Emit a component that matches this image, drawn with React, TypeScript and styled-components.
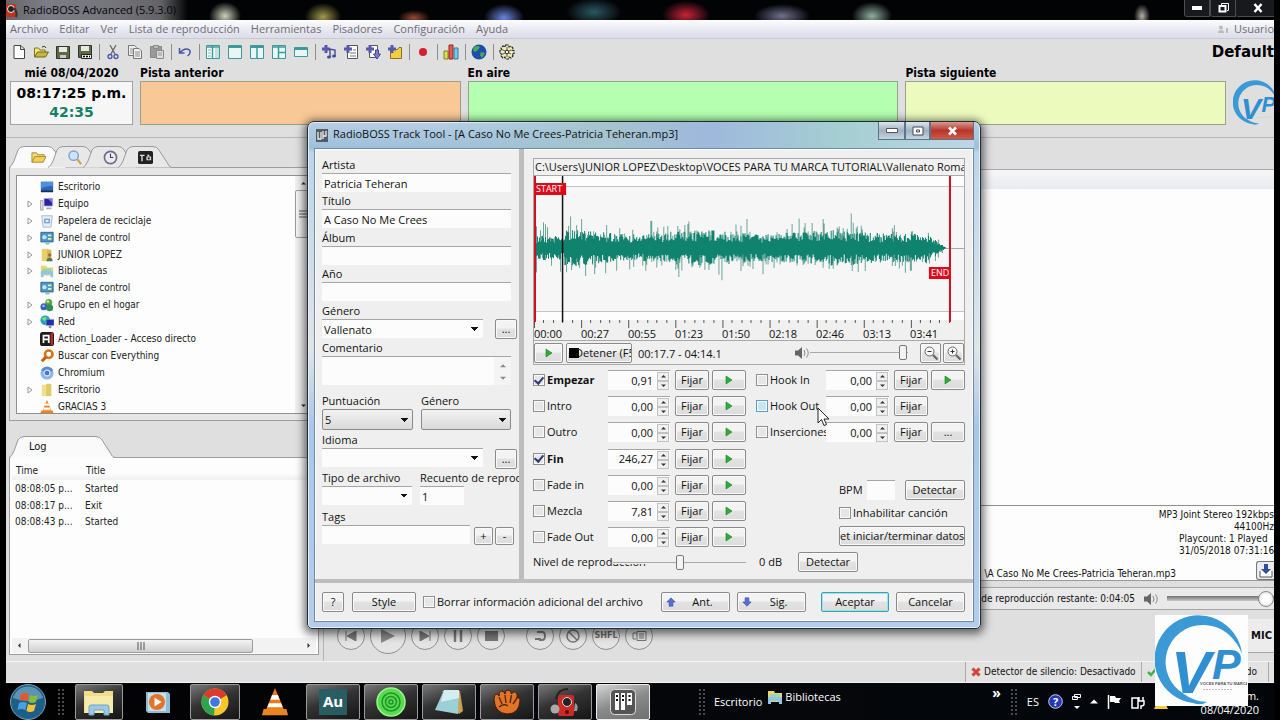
import React from "react";
import styled, { createGlobalStyle, css } from "styled-components";

const SEGOE = `"Open Sans", "Noto Sans", sans-serif`;
const TAHOMA = `"DejaVu Sans Condensed", "DejaVu Sans", sans-serif`;
const VERDANA = `"DejaVu Sans", sans-serif`;

const GlobalStyle = createGlobalStyle`
  * { box-sizing: border-box; }
  body { margin: 0; background: #000; color: #111; font: 11px/16px ${SEGOE}; overflow: hidden; }
  button, input, select, textarea { font: inherit; color: inherit; margin: 0; padding: 0; }
  ul, p, h1, h2 { margin: 0; padding: 0; list-style: none; font-size: inherit; }
  svg { display: block; flex: none; }
`;

/* ---------- main window ---------- */
const Desktop = styled.div`
  position: relative;
  display: flex;
  flex-direction: column;
  height: 100vh;
  padding: 0 6px;
  background: #000;
  overflow: hidden;
`;

const TitleBar = styled.header`
  display: flex;
  align-items: center;
  gap: 4px;
  flex: 0 0 20px;
  overflow: hidden;
  color: #050505;
  background:
    linear-gradient(90deg, #66666a, #7d7d88 40px, #74747a 110px, #636367 155px, transparent 182px) 0 0 / 190px 100% no-repeat,
    radial-gradient(ellipse 16px 14px at 219px 16px, #c9d4bb, transparent),
    radial-gradient(ellipse 18px 14px at 317px 17px, #a09a4c, transparent),
    radial-gradient(ellipse 16px 8px at 408px 18px, #9b4a33, transparent),
    radial-gradient(ellipse 20px 14px at 498px 18px, #6c86e0, transparent),
    radial-gradient(ellipse 28px 14px at 588px 12px, #2c5763, transparent),
    radial-gradient(ellipse 24px 14px at 680px 15px, #c92338, transparent),
    radial-gradient(ellipse 28px 12px at 776px 16px, #70708f, transparent),
    radial-gradient(ellipse 20px 14px at 866px 16px, #8fb0a0, transparent),
    radial-gradient(ellipse 8px 12px at 1136px 16px, #b6aea4, transparent),
    #020305;
`;

const TitleText = styled.h1`
  font-weight: 400;
  flex: 1;
`;

const CaptionButtons = styled.div`
  display: flex;
  align-self: flex-start;
  margin-right: -6px;
`;

const CaptionButton = styled.button<{ $wide?: boolean }>`
  display: grid;
  place-items: center;
  width: ${(p) => (p.$wide ? 44 : 26)}px;
  height: 17px;
  border: 1px solid #4a4d52;
  border-top: 0;
  border-left-width: ${(p) => (p.$wide ? 0 : 1)}px;
  border-radius: 0 0 0 3px;
  background: #17191c;
`;

const MenuBar = styled.nav`
  display: flex;
  align-items: center;
  flex: 0 0 19px;
  gap: 11px;
  padding: 0 0 0 4px;
  color: #6d6d74;
  background: linear-gradient(#fdfdfe, #e6e7f0 60%, #dcdde8);
  border-bottom: 1px solid #c9cad6;
  white-space: nowrap;
`;

const MenuItem = styled.a`
  color: inherit;
  text-decoration: none;
`;

const UserBox = styled.span`
  display: flex;
  gap: 6px;
  align-items: center;
  margin-left: auto;
`;

const Shell = styled.main`
  display: flex;
  flex-direction: column;
  flex: 1;
  min-height: 0;
  background: #dfdfdf;
  font: 10px/14px ${TAHOMA};
`;

const ToolBar = styled.div`
  display: flex;
  align-items: center;
  flex: 0 0 26px;
  padding-left: 5px;
  gap: 6px;
`;

const ToolButton = styled.button`
  border: 0;
  background: none;
  width: 16px;
  height: 18px;
  display: grid;
  place-items: center;
`;

const Divider = styled.span`
  width: 1px;
  height: 16px;
  margin-right: -1px;
  background: #8e8e8e;
`;

const ProfileName = styled.strong`
  margin-left: auto;
  font: bold 15px/18px ${VERDANA};
  color: #000;
`;

const NowRow = styled.section`
  display: flex;
  gap: 7px;
  flex: 0 0 73px;
  padding: 0 0 0 4px;
  border-bottom: 1px solid #b7b7b7;
`;

const Caption = styled.h2`
  font: bold 12px/16px ${TAHOMA};
  color: #000;
`;

const ClockBlock = styled.div`
  width: 123px;
  text-align: center;
`;

const ClockFace = styled.div`
  height: 44px;
  padding-top: 2px;
  border: 1px solid #a3a3a3;
  background: #f6f6f7;
  font: bold 14px/19px ${VERDANA};
  color: #000;
`;

const Countdown = styled.div`
  color: #118067;
`;

const TrackBlock = styled.div<{ $grow: number }>`
  flex: ${(p) => p.$grow} 1 0;
`;

const TrackBox = styled.div<{ $fill: string }>`
  height: 44px;
  border: 1px solid #9aa08e;
  background: ${(p) => p.$fill};
`;

const LogoSlot = styled.div`
  width: 41px;
  overflow: hidden;
  padding-top: 15px;
`;

const Body = styled.div`
  display: flex;
  flex: 1;
  min-height: 0;
`;

const LeftColumn = styled.div`
  display: flex;
  flex-direction: column;
  width: 318px;
  padding: 8px 4px 6px 3px;
  border-right: 1px solid #b4b4b4;
`;

const TabStrip = styled.div`
  display: flex;
  position: relative;
  z-index: 1;
  margin-bottom: -1px;
`;

const TabButton = styled.button<{ $w: number; $overlap?: boolean; $text?: boolean }>`
  position: relative;
  width: ${(p) => p.$w}px;
  height: 22px;
  border: 0;
  background: none;
  margin-left: ${(p) => (p.$overlap ? -19 : 0)}px;
  > svg { position: absolute; inset: 0; }
  > span {
    position: relative;
    display: grid;
    justify-content: ${(p) => (p.$text ? "start" : "center")};
    padding-left: ${(p) => (p.$text ? 20 : 0)}px;
    font-size: 11px;
  }
`;

const TreePanel = styled.div`
  height: 254px;
  flex: none;
  padding: 7px 0 6px 6px;
  border: 1px solid #9d9d9d;
  background: #e6e6e6;
  margin-bottom: 15px;
`;

const TreeFrame = styled.div`
  display: flex;
  height: 100%;
  border: 1px solid #8f8f8f;
  background: #fdfdfd;
  overflow: hidden;
`;

const TreeList = styled.ul`
  flex: 1;
  padding: 2px 0 0 10px;
`;

const TreeRow = styled.li`
  display: flex;
  align-items: center;
  height: 17px;
  color: #222;
  &:nth-child(6) { height: 16px; }
`;

const Twisty = styled.span`
  width: 13px;
`;

const TreeLabel = styled.span`
  margin-left: 4px;
`;

const VScroll = styled.div`
  display: flex;
  flex-direction: column;
  align-items: center;
  width: 22px;
  padding: 5px 6px 5px 0;
  background: #f0f0f0;
`;

const VThumb = styled.div`
  display: grid;
  place-items: center;
  width: 16px;
  height: 48px;
  margin: 4px 0 auto;
  border: 1px solid #9b9b9b;
  border-radius: 2px;
  background: linear-gradient(90deg, #f7f7f7, #d6d6d6);
`;

const LogPanel = styled.div`
  display: flex;
  flex-direction: column;
  flex: 1;
  min-height: 0;
  border: 1px solid #9d9d9d;
  background: #fdfdfd;
  padding: 4px 2px 1px;
`;

const LogTable = styled.table`
  width: 100%;
  border-collapse: collapse;
  text-align: left;
  color: #222;
  th { font-weight: 400; height: 18px; padding: 0 4px; background: linear-gradient(#fdfdfd 60%, #efefef); }
  th:first-child { width: 70px; }
  td { height: 16px; padding: 0 3px; }
  tbody tr:first-child td { height: 18px; }
`;

const HScroll = styled.div`
  display: flex;
  align-items: center;
  justify-content: space-between;
  height: 15px;
  margin-top: auto;
  padding: 0 5px;
  background: #f2f2f2;
`;

const HThumb = styled.div`
  display: grid;
  place-items: center;
  flex: 0 0 225px;
  height: 14px;
  margin: 0 auto 0 6px;
  border: 1px solid #9b9b9b;
  border-radius: 2px;
  background: linear-gradient(#f4f4f4, #cfcfcf);
`;

const RightColumn = styled.div`
  display: flex;
  flex-direction: column;
  flex: 1;
  min-width: 0;
  padding-left: 3px;
`;

const PlaylistHead = styled.div`
  flex: 0 0 20px;
  margin-top: 31px;
  border-top: 1px solid #a9a9a9;
  background: linear-gradient(#f6f6f8, #e9eaef);
`;

const Playlist = styled.div`
  flex: 1;
  background: #fdfdfd;
  border-bottom: 1px solid #8e8e8e;
`;

const TrackInfo = styled.div`
  display: flex;
  flex: 0 0 75px;
  flex-direction: column;
  padding-top: 3px;
  background: #fdfdfd;
  border-bottom: 1px solid #9a9a9a;
  line-height: 12px;
`;

const InfoLine = styled.p<{ $left?: boolean }>`
  display: flex;
  align-self: flex-end;
  width: ${(p) => (p.$left ? "95px" : "auto")};
  justify-content: ${(p) => (p.$left ? "flex-start" : "flex-end")};
  white-space: nowrap;
`;

const FileLine = styled.div`
  display: flex;
  align-items: center;
  justify-content: flex-end;
  gap: 80px;
  margin-top: auto;
  > span { padding-top: 7px; }
`;

const SaveButton = styled.button`
  display: grid;
  place-items: center;
  width: 18px;
  height: 19px;
  border: 1px solid #777;
  border-right: 0;
  border-radius: 3px 0 0 3px;
  background: #ececec;
`;

const Remaining = styled.div`
  display: flex;
  align-items: center;
  justify-content: flex-end;
  gap: 8px;
  flex: 0 0 23px;
  margin-top: 6px;
  border: 1px solid #a5a5a5;
  border-right: 0;
  background: #e9e9e9;
`;

const VolumeRange = styled.input`
  appearance: none;
  width: 107px;
  height: 16px;
  background: none;
  &::-webkit-slider-runnable-track { height: 5px; background: linear-gradient(#6f6f6f, #c9c9c9); }
  &::-webkit-slider-thumb { appearance: none; width: 16px; height: 16px; margin-top: -5px; border-radius: 50%; border: 1px solid #888; background: radial-gradient(#fff 40%, #cfcfcf); }
`;

const Transport = styled.div`
  display: flex;
  align-items: center;
  flex: 0 0 51px;
  padding-left: 10px;
  gap: 5px;
`;

const RoundButton = styled.button<{ $big?: boolean; $apart?: boolean }>`
  display: grid;
  place-items: center;
  width: ${(p) => (p.$big ? 36 : 28)}px;
  height: ${(p) => (p.$big ? 36 : 28)}px;
  margin-left: ${(p) => (p.$apart ? 16 : 0)}px;
  border: 1px solid #8f8f8f;
  border-radius: 50%;
  background: #e4e4e4;
  color: #6c6c6c;
  font: bold 8px/10px ${VERDANA};
`;

const MicButton = styled.button`
  display: flex;
  align-items: center;
  justify-content: flex-end;
  align-self: flex-start;
  margin: 9px 0 0 auto;
  width: 60px;
  height: 34px;
  padding-right: 2px;
  border: 0;
  border-bottom: 1px solid #aaa;
  background: #ececec;
  font: bold 10px/14px ${VERDANA};
`;

const StatusBar = styled.footer`
  display: flex;
  justify-content: flex-end;
  flex: 0 0 22px;
  border-top: 1px solid #f4f4f4;
  border-bottom: 1px solid #f4f4f4;
  background: #dfdfdf;
`;

const StatusCell = styled.div<{ $w: number }>`
  display: flex;
  align-items: center;
  gap: 3px;
  width: ${(p) => p.$w}px;
  padding-left: 5px;
  border-left: 1px solid #aaa;
  background: #e3e3e3;
  white-space: nowrap;
`;

const TrailingText = styled.span`
  margin-left: auto;
  padding-right: 11px;
`;

/* ---------- taskbar ---------- */
const TaskBar = styled.nav`
  display: flex;
  align-items: center;
  flex: 0 0 37px;
  padding-left: 4px;
  background: linear-gradient(90deg, #020203, #05070b 60%, #02060a);
  color: #fff;
`;

const TaskButton = styled.button<{ $w: number; $mode?: "open" | "active"; $gap?: number }>`
  display: grid;
  place-items: center;
  width: ${(p) => p.$w}px;
  height: 36px;
  margin-left: ${(p) => p.$gap ?? 4}px;
  border: 1px solid transparent;
  border-radius: 2px;
  background: none;
  ${(p) => p.$mode === "open" && css`
    border-color: #9a9a9a;
    background: linear-gradient(160deg, #777 0, #333 45%, #151515);
  `}
  ${(p) => p.$mode === "active" && css`
    border-color: #ededed;
    background: linear-gradient(160deg, #d5d5d5 0, #8a8a8a 50%, #6f6f6f);
  `}
`;

const Grip = styled.span`
  width: 8px;
  height: 28px;
  background: radial-gradient(circle, #4a4a4a 1px, transparent 1px) 0 0 / 4px 4px;
`;

const DeskBand = styled.div`
  display: flex;
  align-items: center;
  gap: 5px;
  margin-left: 8px;
`;

const BandLink = styled.a<{ $raised?: boolean }>`
  display: flex;
  align-items: center;
  gap: 2px;
  color: #fff;
  text-decoration: none;
  padding-bottom: ${(p) => (p.$raised ? 9 : 0)}px;
`;

const Chevron = styled.button`
  border: 0;
  background: none;
  align-self: flex-start;
  font: bold 14px/12px ${SEGOE};
`;

const Tray = styled.div`
  display: flex;
  align-items: center;
  gap: 9px;
  margin-left: auto;
`;

const Clock = styled.div`
  width: 82px;
  padding-top: 2px;
  text-align: right;
  line-height: 14px;
  margin-right: 15px;
`;

const Watermark = styled.div`
  position: absolute;
  right: 32px;
  bottom: 14px;
  width: 93px;
  height: 91px;
  background: #fdfdfd;
`;

/* ---------- track tool dialog ---------- */
const Dialog = styled.section`
  position: absolute;
  left: 307px;
  top: 121px;
  width: 674px;
  display: flex;
  flex-direction: column;
  padding: 0 6px 6px;
  border: 1px solid #222a33;
  border-radius: 7px 7px 5px 5px;
  background: linear-gradient(#b5cfe4, #9fbfd9 26px, #bcd4ec 30px, #dfe5e6 45%, #a9c6ea 60%, #b4cdec);
  box-shadow: inset 0 0 0 1px #e4f1fb, 0 2px 8px 3px rgba(0, 0, 0, 0.55);
`;

const DialogTitle = styled.header`
  display: flex;
  align-items: center;
  height: 26px;
  padding-left: 2px;
  gap: 5px;
  border-radius: 6px 6px 0 0;
  background: linear-gradient(90deg, transparent 20%, #a4c4cf 45%, #9fb8dd 60%, #a5cfd2 80%, #bcd6e6);
  > h2 { flex: 1; font-weight: 400; line-height: 24px; align-self: flex-start; }
`;

const GlassGroup = styled.div`
  display: flex;
  align-self: flex-start;
  > * + * { border-left: 0; }
`;

const GlassButton = styled.button<{ $w: number; $close?: boolean }>`
  display: grid;
  place-items: center;
  width: ${(p) => p.$w}px;
  height: 18px;
  border: 1px solid #5c7488;
  border-top: 0;
  background: ${(p) => (p.$close ? "linear-gradient(#d99a92, #b8352b 50%, #cf5a48)" : "linear-gradient(#dce6ee, #9fb1c0 50%, #c4d5e2)")};
`;

const DialogBody = styled.form`
  background: #efefef;
  border: 1px solid #6c8ba8;
  box-shadow: inset 0 0 0 1px #fff;
`;

const Panes = styled.div`
  display: flex;
  height: 434px;
  border-bottom: 4px solid #bdbdbd;
`;

const TagPane = styled.div`
  display: flex;
  flex-direction: column;
  width: 209px;
  flex: none;
  padding: 7px 8px 0 7px;
  border-right: 5px solid #bdbdbd;
`;

const Field = styled.label<{ $h?: number; $w?: number }>`
  display: flex;
  flex-direction: column;
  flex: none;
  height: ${(p) => p.$h ?? 37}px;
  width: ${(p) => (p.$w ? p.$w + "px" : "auto")};
  line-height: 17px;
  white-space: nowrap;
`;

const boxLook = css`
  border: 0;
  border-top: 1px solid #a6a6a6;
  border-radius: 0;
  background: #fcfcfc;
  outline: 0;
`;

const TextInput = styled.input<{ $short?: boolean }>`
  ${boxLook}
  width: ${(p) => (p.$short ? "44px" : "100%")};
  height: 19px;
  padding: 0 2px;
`;

const NoteBox = styled.div`
  display: flex;
  height: 29px;
  border-top: 1px solid #a6a6a6;
`;

const NoteArea = styled.textarea`
  flex: 1;
  min-width: 0;
  border: 0;
  resize: none;
  background: #fcfcfc;
  outline: 0;
`;

const NoteScroll = styled.div`
  display: flex;
  flex-direction: column;
  justify-content: space-between;
  align-items: center;
  width: 17px;
  padding: 6px 0 4px;
  background: #f4f4f4;
`;

const caret = "linear-gradient(to bottom left, #111 50%, transparent 50%), linear-gradient(to bottom right, #111 50%, transparent 50%)";

const Combo = styled.select<{ $button?: boolean }>`
  appearance: none;
  width: 100%;
  height: ${(p) => (p.$button ? 21 : 19)}px;
  padding: 0 2px;
  ${boxLook}
  background-image: ${caret};
  background-size: 4px 4px, 4px 4px;
  background-position: right 8px center, right 4px center;
  background-repeat: no-repeat;
  ${(p) => p.$button && css`
    border: 1px solid #8a8a8a;
    border-radius: 2px;
    background-image: ${caret}, linear-gradient(#f2f2f2, #dadada);
    background-size: 4px 4px, 4px 4px, 100% 100%;
    background-position: right 7px center, right 3px center, 0 0;
  `}
`;

const Inline = styled.div<{ $gap: number }>`
  display: flex;
  align-items: center;
  gap: ${(p) => p.$gap}px;
`;

const FieldRow = styled(Inline)<{ $clip?: boolean }>`
  align-items: flex-end;
  flex: none;
  ${(p) => p.$clip && "overflow: hidden; margin-right: -8px;"}
`;

const PushButton = styled.button<{ $w: number; $h?: number; $default?: boolean }>`
  display: flex;
  align-items: center;
  justify-content: center;
  flex: none;
  width: ${(p) => p.$w}px;
  height: ${(p) => p.$h ?? 20}px;
  overflow: hidden;
  white-space: nowrap;
  border: 1px solid ${(p) => (p.$default ? "#35a3b5" : "#8a8a8a")};
  border-radius: 2px;
  box-shadow: inset 0 0 0 1px ${(p) => (p.$default ? "#a5e0e8" : "#fafafa")};
  background: linear-gradient(#f3f3f3 45%, #e2e2e2 50%, #dcdcdc);
`;

const IconPush = styled(PushButton)`
  justify-content: flex-start;
  padding-left: 4px;
  > span { flex: 1; text-align: center; }
`;

const StopPush = styled(PushButton)`
  justify-content: flex-start;
  padding-left: 2px;
  > svg { margin-right: -4px; }
`;

const CuePane = styled.div`
  flex: 1;
  min-width: 0;
  padding: 9px 8px 0 9px;
  display: flex;
  flex-direction: column;
`;

const PathBox = styled.div`
  height: 18px;
  overflow: hidden;
  white-space: nowrap;
  padding-left: 1px;
  border: 1px solid #a9a9a9;
  background: #f1f1f1;
`;

const WaveFrame = styled.div`
  height: 165px;
  border: 1px solid #a9a9a9;
  border-top: 0;
  background: #f0f0f0;
`;

const TimeScale = styled.div`
  display: flex;
  > span { width: 47px; flex: none; line-height: 12px; }
`;

const PlayRow = styled.div`
  display: flex;
  align-items: center;
  height: 24px;
  border: 1px solid #a9a9a9;
  border-top: 0;
`;

const Elapsed = styled.time`
  margin: 3px auto 0 6px;
`;

const ThinRange = styled.input<{ $w: number; $overlay?: boolean }>`
  appearance: none;
  width: ${(p) => p.$w}px;
  height: 18px;
  background: ${(p) => (p.$overlay ? "linear-gradient(#efefef 11px, transparent 0)" : "none")};
  position: relative;
  &::-webkit-slider-runnable-track { height: 1px; background: #a9a9a9; }
  &::-webkit-slider-thumb { appearance: none; width: 8px; height: 15px; margin-top: -7px; border-radius: 2px; border: 1px solid #777; background: #f4f4f4; }
`;

const CueArea = styled.div`
  display: grid;
  grid-template-columns: 213px 209px;
  justify-content: space-between;
  padding-top: 2px;
`;

const CueRow = styled.div<{ $cols: string }>`
  display: grid;
  grid-template-columns: ${(p) => p.$cols};
  align-items: center;
  height: 26px;
  &:nth-child(4) { height: 27px; }
`;

const CheckLabel = styled.label<{ $bold?: boolean }>`
  display: flex;
  align-items: center;
  gap: 2px;
  overflow: hidden;
  white-space: nowrap;
  font-weight: ${(p) => (p.$bold ? 700 : 400)};
`;

const Check = styled.input<{ $hot?: boolean }>`
  appearance: none;
  flex: none;
  width: 12px;
  height: 12px;
  border: 1px solid ${(p) => (p.$hot ? "#5c9fc4" : "#8f8f8f")};
  background: ${(p) => (p.$hot ? "#c6e6f6" : "#e6e6e8")};
  box-shadow: inset 0 0 0 1px #fafafa;
  display: grid;
  place-items: center;
  &:checked::after { content: ""; width: 4px; height: 7px; border: solid #2c3a78; border-width: 0 2px 2px 0; transform: translateY(-1px) rotate(40deg); }
`;

const NumberBox = styled.span`
  display: flex;
  height: 20px;
  padding-right: 1px;
  ${boxLook}
`;

const NumberInput = styled.input`
  flex: 1;
  min-width: 0;
  border: 0;
  background: none;
  text-align: right;
  outline: 0;
`;

const BpmInput = styled.input`
  ${boxLook}
  width: 28px;
  height: 20px;
`;

const Spin = styled.span`
  display: grid;
  margin: 1px 0 1px 4px;
`;

const SpinButton = styled.button<{ $down?: boolean }>`
  display: grid;
  place-items: center;
  width: 12px;
  height: 9px;
  border: 1px solid #c2c2c2;
  background: #f0f0f0;
  > svg { transform: ${(p) => (p.$down ? "rotate(180deg)" : "none")}; }
`;

const CueExtras = styled.div`
  display: flex;
  flex-direction: column;
  align-items: flex-start;
  width: 126px;
  margin: 35px 0 0 auto;
`;

const BpmLabel = styled.label`
  display: flex;
  align-items: center;
  gap: 4px;
`;

const WideButton = styled(PushButton)`
  justify-content: flex-start;
`;

const LevelRow = styled.div`
  display: flex;
  align-items: center;
  height: 20px;
  margin-top: 2px;
  > label { width: 80px; white-space: nowrap; }
  > output { width: 52px; padding-left: 13px; }
`;

const DialogFooter = styled.div`
  display: flex;
  align-items: center;
  height: 38px;
  padding: 0 8px 0 7px;
`;

const Spacer = styled.span<{ $w?: number }>`
  ${(p) => (p.$w ? `width: ${p.$w}px;` : "flex: 1;")}
`;

const Cursor = styled.svg`
  position: absolute;
  left: 817px;
  top: 407px;
`;

/* ---------- drawings ---------- */
const PlayIcon = () => (
  <svg width="8" height="10" viewBox="0 0 8 10"><path d="M1 1l6 4-6 4z" fill="#2cae37" stroke="#16801f" strokeWidth=".6" /></svg>
);
const Tri = ({ dir = "up", color = "#333", s = 5 }: { dir?: string; color?: string; s?: number }) => {
  const d: Record<string, string> = { up: "M0 7L5 2l5 5z", down: "M0 3l5 5 5-5z", left: "M7 0v10L2 5z", right: "M3 0v10l5-5z" };
  return <svg width={s} height={s} viewBox="0 0 10 10"><path d={d[dir]} fill={color} /></svg>;
};
const Gripper = ({ vertical = false }: { vertical?: boolean }) => (
  <svg width="8" height="8" viewBox="0 0 8 8"><path d={vertical ? "M0 1h8M0 4h8M0 7h8" : "M1 0v8M4 0v8M7 0v8"} stroke="#555" /></svg>
);
const Speaker = () => (
  <svg width="16" height="14" viewBox="0 0 16 14">
    <path d="M1 4.500h3l4-3.500v12L4 9.500H1z" fill="#666" />
    <path d="M10 4q2 3 0 6M12.500 2.500q3.500 4.500 0 9" fill="none" stroke="#888" />
  </svg>
);
const Lens = ({ minus = false }: { minus?: boolean }) => (
  <svg width="16" height="16" viewBox="0 0 16 16" fill="none" stroke="#666">
    <circle cx="6.500" cy="6.500" r="4.500" fill="#f8f8f8" /><path d="M10 10l4.500 4.500" strokeWidth="2.200" />
    <path d={minus ? "M4.500 6.500h4" : "M4.500 6.500h4M6.500 4.500v4"} stroke="#333" />
  </svg>
);
const ShortArrow = ({ down = false }: { down?: boolean }) => (
  <svg width="10" height="10" viewBox="0 0 12 12"><path transform={down ? "rotate(180 6 6)" : undefined} d="M6 1l5 5H8.300v5H3.700V6H1z" fill="#5670d6" stroke="#33449c" strokeWidth=".7" /></svg>
);

const TOOL: Record<string, React.ReactNode> = {
  new: <path d="M3 1.500h7l3.500 3.500v9.500H3z M9.500 1.500v4h4" fill="#fff" stroke="#444" />,
  open: <><path d="M1.500 13V4h4l1.500 2h5v2" fill="#f5e680" stroke="#7d7421" /><path d="M1.500 13L4.500 8h11l-3 5z" fill="#c9b83a" stroke="#6d651c" /><path d="M9 3q3-2 4 1" fill="none" stroke="#333" /></>,
  save: <><path d="M1.500 2.500h13v12h-13z" fill="#5c6b40" stroke="#333" /><path d="M4 3h8v5H4z" fill="#e8e8e8" /><path d="M5 11h6v3H5z" fill="#ccc" /></>,
  saveAs: <><path d="M1.500 1.500h13v12h-13z" fill="#5c6b40" stroke="#333" /><path d="M4 2h8v5H4z" fill="#e8e8e8" /><path d="M4.500 10.500h10v4h-10z" fill="#f4f4e8" stroke="#222" /><path d="M6 12.500h2m1 0h2m1 0h1" stroke="#000" strokeWidth="1.500" /></>,
  cut: <><path d="M5 1l5 9M11 1L6 10" stroke="#666" strokeWidth="1.300" /><circle cx="5" cy="12.500" r="2" fill="none" stroke="#4a56ae" strokeWidth="1.300" /><circle cx="11" cy="12.500" r="2" fill="none" stroke="#4a56ae" strokeWidth="1.300" /></>,
  copy: <><path d="M1.500 1.500h6l2 2v8h-8z" fill="#eee" stroke="#777" /><path d="M3 5h3m-3 2h3m-3 2h3" stroke="#999" /><path d="M6.500 4.500h5.500l2.500 2.500v7.500h-8z" fill="#f3f3f3" stroke="#777" /><path d="M8 8h5m-5 2h5m-5 2h5" stroke="#888" /></>,
  paste: <><path d="M1.500 2.500h11v11h-11z" fill="#9a9a9a" stroke="#888" /><path d="M4.500 1.500h5v3h-5z" fill="#bbb" stroke="#888" /><path d="M7.500 6.500h7v8h-7z" fill="#ddd" stroke="#888" /><path d="M9 9h4m-4 2h4" stroke="#999" /></>,
  undo: <path d="M2.500 4v5h5M3 8.500Q8 3 12.500 6q2 3-2 6" fill="none" stroke="#4b55a5" strokeWidth="1.500" />,
  lay1: <><path d="M1.500 1.500h13v13h-13z" fill="#fff" stroke="#3c9a9b" /><path d="M7.500 2v12M2 3h12" stroke="#3c9a9b" strokeWidth="1.500" /><path d="M3 6h3M3 9h3M3 12h3" stroke="#6bb" /><path d="M10 4h4v10h-4z" fill="#bfe3df" /></>,
  lay2: <><path d="M1.500 1.500h13v13h-13z" fill="#e9f6f4" stroke="#3c9a9b" /><path d="M2 3h12" stroke="#3c9a9b" strokeWidth="2" /></>,
  lay3: <><path d="M1.500 1.500h13v13h-13z" fill="#e9f6f4" stroke="#3c9a9b" /><path d="M2 3h12" stroke="#3c9a9b" strokeWidth="2" /><path d="M8 3v11" stroke="#3c9a9b" strokeWidth="1.500" /></>,
  lay4: <><path d="M1.500 1.500h13v13h-13z" fill="#e9f6f4" stroke="#3c9a9b" /><path d="M2 3h12M7.500 2v12M8 8.500h6" stroke="#3c9a9b" strokeWidth="1.500" /></>,
  lay5: <><path d="M1.500 3.500h13v9h-13z" fill="#e9f6f4" stroke="#3c9a9b" /><path d="M2 5h12" stroke="#3c9a9b" strokeWidth="2" /></>,
  addNote: <><path d="M5 1v8M1 5h8" stroke="#5a58a8" strokeWidth="3" /><path d="M9 13V5l5 1v6" fill="none" stroke="#444a99" strokeWidth="1.400" /><ellipse cx="8" cy="13" rx="2" ry="1.500" fill="#444a99" /><ellipse cx="13" cy="12" rx="2" ry="1.500" fill="#444a99" /></>,
  addList: <><path d="M4.500 1.500h10v13h-10z" fill="#fff" stroke="#555" /><path d="M7 9h6m-6 3h6m-3-6h3" stroke="#777" /><path d="M5 1v8M1 5h8" stroke="#5a58a8" strokeWidth="3" /></>,
  addDown: <><path d="M4.500 1.500h8v12h-8z" fill="#fff" stroke="#555" /><path d="M5 1v8M1 5h8" stroke="#5a58a8" strokeWidth="3" /><path d="M10.500 6v4H8.500l3.500 5 3.500-5H13.500V6z" fill="#7d7bd0" stroke="#44449a" /></>,
  addFolder: <><path d="M3.500 5.500h7l1.500-2h2.500v11h-11z" fill="#f0cf45" stroke="#8d7216" /><path d="M5 1v8M1 5h8" stroke="#5a58a8" strokeWidth="3" /></>,
  rec: <circle cx="8" cy="8" r="4" fill="#d3202e" />,
  chart: <><path d="M1 7h4v8H1z" fill="#d8e24a" stroke="#7a8422" /><path d="M6 1h4v14H6z" fill="#e35b52" stroke="#9b241d" /><path d="M11 4h4v11h-4z" fill="#79c6e8" stroke="#2a7fa5" /></>,
  globe: <><circle cx="8" cy="8" r="7.500" fill="#1d4fa8" /><path d="M3 3q4-2 6 0l-2 3-3 2q-3-1-1-5zM10 8l4 1-3 5-2-3z" fill="#48ab5c" /></>,
  gear: <><path d="M6.500 1h3l.5 2 2-.8 2 2-1 2 2 .3v3l-2 .5 1 2-2 2-2-1-.5 2h-3L6 13l-2 1-2-2 1-2-2-.5v-3L3 6 2 4l2-2 2 1z" fill="#f0ecb4" stroke="#222" strokeWidth="1.100" strokeDasharray="3 1" /><path d="M8 3v10M4 6l8 4M12 6l-8 4" stroke="#333" strokeWidth=".8" /><circle cx="8" cy="8" r="1.800" fill="#fff" stroke="#222" /></>,
};
const TOOL_ORDER = ["new", "open", "save", "saveAs", "|", "cut", "copy", "paste", "|", "undo", "|", "lay1", "lay2", "lay3", "lay4", "lay5", "|", "addNote", "addList", "addDown", "addFolder", "|", "rec", "|", "chart", "|", "globe", "|", "gear"];

const ICONS: Record<string, React.ReactNode> = {
  desktop: <><path d="M1 2h14v11H1z" fill="#2b66b8" /><path d="M1 2h14v5Q7 6 1 10z" fill="#4f8fd8" /><path d="M1 12h14v2H1z" fill="#1b2d55" /></>,
  computer: <><path d="M0.500 4h3v11h-3z" fill="#ddd" stroke="#888" strokeWidth=".7" /><path d="M4 1h11v10H4z" fill="#c9c9d8" /><path d="M5 2h9v8H5z" fill="#2a22a8" /><path d="M9 2h5v5z" fill="#7d77e2" /><path d="M7 12h6v2H7z" fill="#aaa" /></>,
  bin: <><path d="M2 2h12l-1.500 13h-9z" fill="#e6eef6" stroke="#a5b6c6" /><path d="M5.500 6h5v4h-5z" fill="none" stroke="#5a8fd6" strokeWidth="1.300" /></>,
  panel: <><path d="M1 1.500h14v11H1z" fill="#4c97c6" stroke="#246085" /><circle cx="5" cy="7" r="2.500" fill="#bfe4f2" /><path d="M9 4h4v2H9zM9 8h4v2H9z" fill="#e4f3a8" /><path d="M5 13h7l-2 2.500H7z" fill="#8dbbd6" /></>,
  user: <><path d="M2 1h8v14H2z" fill="#e8cf6b" /><path d="M8 2h5v13H8z" fill="#d8b94c" /><circle cx="11" cy="8" r="2" fill="#a56b3e" /><path d="M7.500 15q0-4 3.500-4t3.500 4z" fill="#4b7d52" /></>,
  libs: <><path d="M1 2h6l1 2h7v9H1z" fill="#ecd471" /><path d="M3 5h10v6H3z" fill="#9fd3a8" /><path d="M1 15V9q0-1 1-1h12q1 0 1 1v6h-3v-3H4v3z" fill="#8dc6e6" /></>,
  home: <><circle cx="10" cy="5" r="4" fill="#5aa747" /><circle cx="4.500" cy="10" r="4" fill="#3a5fc2" /><circle cx="11" cy="11" r="4" fill="#2f8f57" /><circle cx="9" cy="4" r="1.500" fill="#c6ecae" /><circle cx="4" cy="9" r="1.300" fill="#b9cbf6" /></>,
  net: <><circle cx="6" cy="6" r="5.500" fill="#28a3b8" /><path d="M2 4q3-3 6-1l-3 4z" fill="#7be37c" /><path d="M7 5h9v7H7z" fill="#1c31b8" stroke="#aab" strokeWidth=".6" /><path d="M10 12h3v3h-3z" fill="#888" /></>,
  action: <><rect width="16" height="16" rx="3" fill="#1c1c1c" /><path d="M12 1h3v14h-3z" fill="#b12a2a" /><path d="M4 12.500V4h6v8.500M4 8.500h6" fill="none" stroke="#fff" strokeWidth="2" /></>,
  search: <><circle cx="10" cy="6" r="4.300" fill="none" stroke="#d8731a" strokeWidth="3" /><path d="M7 9l-5 5" stroke="#c05f12" strokeWidth="3.500" /></>,
  chromium: <><circle cx="8" cy="8" r="7.500" fill="#8fb4ee" /><path d="M8 8L1.500 5A7.500 7.500 0 0 1 15 5z" fill="#5f8ad8" /><circle cx="8" cy="8" r="3.300" fill="#4775cf" stroke="#dce8fb" strokeWidth="1.200" /></>,
  folder: <><path d="M2 2h6v13H2z" fill="#efe08e" /><path d="M7 1h6v14H7z" fill="#dfc968" /></>,
  vlc: <><path d="M8 0l5 12H3z" fill="#ec7a1c" /><path d="M6.300 4h3.400l1 2.700H5.300z" fill="#fff" /><path d="M4.500 8.700h7l.9 2.300H3.600z" fill="#fff" /><path d="M1.500 12h13l1 3.500H.5z" fill="#e9851c" /></>,
  openTab: <><path d="M1 13V3h5l1 2h7v2" fill="#f4dd7c" stroke="#a88a2a" /><path d="M1 13l3-6h12l-3 6z" fill="#f1cf58" stroke="#a88a2a" /></>,
  lensTab: <><circle cx="6" cy="6" r="5" fill="#cfe4f8" stroke="#7da4cc" strokeWidth="1.500" /><path d="M10 10l4 5" stroke="#c9a13e" strokeWidth="2.200" /></>,
  clockTab: <><circle cx="8" cy="8" r="6.500" fill="#e9eaf2" stroke="#6b6e86" strokeWidth="1.800" /><path d="M8 4v4h3" fill="none" stroke="#444" strokeWidth="1.200" /></>,
  cam: <><rect y="1" width="16" height="14" rx="2" fill="#222" /><path d="M2 5h5v1.500H5V12H3.500V6.500H2zM9 7h5v4H9z" fill="#ddd" /><path d="M10 5h2v2h-2z" fill="#ddd" /><circle cx="11.500" cy="9" r="1.200" fill="#222" /></>,
};
const Icon = ({ name, size = 14 }: { name: string; size?: number }) => (
  <svg width={size} height={size} viewBox="0 0 16 16">{ICONS[name]}</svg>
);

const TREE: [string, string, boolean][] = [
  ["desktop", "Escritorio", false], ["computer", "Equipo", true], ["bin", "Papelera de reciclaje", true],
  ["panel", "Panel de control", true], ["user", "JUNIOR LOPEZ", true], ["libs", "Bibliotecas", true],
  ["panel", "Panel de control", false], ["home", "Grupo en el hogar", true], ["net", "Red", true],
  ["action", "Action_Loader - Acceso directo", false], ["search", "Buscar con Everything", false],
  ["chromium", "Chromium", false], ["folder", "Escritorio", true], ["vlc", "GRACIAS 3", false],
];

const TabShape = ({ w, active = false }: { w: number; active?: boolean }) => (
  <svg width={w} height="22" viewBox={`0 0 ${w} 22`}>
    <path d={`M0 21.500Q3 20 5 15L9 4Q11 .5 15 .5H${w - 19}Q${w - 15} .5 ${w - 13} 4L${w - 4} 18Q${w - 3} 21 ${w} 21.500`} fill={active ? "#fafafa" : "#e8e8e8"} stroke="#9a9a9a" />
    {active && <path d={`M2 21.500H${w - 2}`} stroke="#fafafa" strokeWidth="1.500" />}
  </svg>
);

const Waveform = () => {
  let seed = 41;
  const rnd = () => (seed = (seed * 16807) % 2147483647) / 2147483647;
  let core = "";
  let spikes = "";
  for (let x = 2; x < 411; x++) {
    const swell = x < 30 ? 0.8 : x > 390 ? Math.max(0.06, (411 - x) / 21) : 1 + 0.12 * Math.sin(x / 21);
    const up = (6 + rnd() * 10) * swell;
    const down = (6 + rnd() * 10) * swell;
    core += `M${x}.5 ${(72 - up).toFixed(1)}V${(72 + down).toFixed(1)}`;
    if (rnd() > 0.68) spikes += `M${x}.5 ${(72 - (11 + rnd() * rnd() * 24) * swell).toFixed(1)}V72`;
    if (rnd() > 0.68) spikes += `M${x}.5 72V${(72 + (12 + rnd() * rnd() * 24) * swell).toFixed(1)}`;
  }
  let ticks = "";
  for (let i = 0; i < 45; i++) {
    const x = Math.round(i * 9.4);
    ticks += i % 5 === 0 ? `M${x}.5 144V153` : `M${x}.5 144V147`;
  }
  return (
    <svg width="100%" height="152" viewBox="0 0 429 152" preserveAspectRatio="none">
      <path d="M0 0h429v144H0z" fill="#fdfdfd" />
      <path d="M0 10h429v125H0z" fill="#f6f6f7" />
      <path d="M0 10.500h429M0 135.500h429" stroke="#c4c4c4" />
      <path d="M0 72.500h429" stroke="#a9a9b4" />
      <path d={spikes} stroke="#6ba596" />
      <path d={core} stroke="#0f836d" />
      <path d={ticks} stroke="#555" />
      <path d="M28.500 0v146" stroke="#111" strokeWidth="1.500" />
      <path d="M1 0v146M415 0v146" stroke="#cf1020" strokeWidth="2" />
      <path d="M0 7h32v12H0zM394 91h21v12h-21z" fill="#dd0a1c" />
      <text x="2" y="16" fill="#fff" fontSize="9" fontFamily="Open Sans, sans-serif">START</text>
      <text x="396" y="100" fill="#fff" fontSize="9" fontFamily="Open Sans, sans-serif">END</text>
    </svg>
  );
};

const VpLogo = ({ w, caption = false }: { w: number; caption?: boolean }) => (
  <svg width={w} height={w} viewBox="0 0 92 92">
    <path d="M90 47Q89 43 87 39A42 42 0 0 0 82 23A44 44 0 1 0 38 88Q46 91 52 87Q38 86 29 79A37 37 0 0 1 48 10Q66 10 78 24Q86 33 90 47z" fill="#3b9ad6" />
    <text x="16" y="78" fontSize="60" fontWeight="bold" fontStyle="italic" fill="#2f8fd0" fontFamily="Liberation Sans, sans-serif">V</text>
    <text x="57" y="64" fontSize="43" fontWeight="bold" fontStyle="italic" fill="#2f8fd0" fontFamily="Liberation Sans, sans-serif">P</text>
    {caption && <text x="45" y="70" fontSize="4" fontWeight="bold" fill="#555" fontFamily="Liberation Sans, sans-serif">VOCES PARA TU MARCA</text>}
    <path d="M48 74.500h30" stroke="#bbb" strokeDasharray="2 1" />
  </svg>
);

const Cue = ({ name, value, checked, cols, extra = "play", hot }: { name: string; value: string; checked?: boolean; cols: string; extra?: "play" | "none" | "dots"; hot?: boolean }) => (
  <CueRow $cols={cols}>
    <CheckLabel $bold={checked}><Check type="checkbox" defaultChecked={checked} $hot={hot} />{name}</CheckLabel>
    <NumberBox>
      <NumberInput aria-label={name} defaultValue={value} />
      <Spin>
        <SpinButton type="button" aria-label="Subir"><Tri /></SpinButton>
        <SpinButton type="button" aria-label="Bajar" $down><Tri /></SpinButton>
      </Spin>
    </NumberBox>
    <span />
    <PushButton type="button" $w={34}>Fijar</PushButton>
    <span />
    {extra === "play" && <PushButton type="button" $w={34} aria-label={`Reproducir ${name}`}><PlayIcon /></PushButton>}
    {extra === "dots" && <PushButton type="button" $w={34}>...</PushButton>}
  </CueRow>
);

const LEFT_COLS = "75px 62px 5px 34px 3px 34px";
const RIGHT_COLS = "70px 63px 5px 34px 3px 34px";

const TrackTool = () => (
  <Dialog>
    <DialogTitle>
      <svg width="12" height="13" viewBox="0 0 12 13"><path d="M0 0h12v13H0z" fill="#555b66" /><path d="M2 3v7h3V3M7 2v8M10 2v5H7" fill="none" stroke="#eee" strokeWidth="1.300" /></svg>
      <h2>RadioBOSS Track Tool - [A Caso No Me Crees-Patricia Teheran.mp3]</h2>
      <GlassGroup>
        <GlassButton $w={27} aria-label="Minimizar"><svg width="12" height="5"><path d="M.5.5h11v4H.5z" fill="#fff" stroke="#555" /></svg></GlassButton>
        <GlassButton $w={25} aria-label="Maximizar"><svg width="12" height="10"><path d="M1 1h10v8H1zM4.500 4h3v2h-3z" fill="#fff" stroke="#445" /></svg></GlassButton>
        <GlassButton $w={44} $close aria-label="Cerrar"><svg width="11" height="10"><path d="M2 1.500l7 7M9 1.500l-7 7" stroke="#fff" strokeWidth="2.500" /></svg></GlassButton>
      </GlassGroup>
    </DialogTitle>
    <DialogBody onSubmit={(e) => e.preventDefault()}>
      <Panes>
        <TagPane>
          <Field $h={36}>Artista<TextInput defaultValue="Patricia Teheran" /></Field>
          <Field>Título<TextInput defaultValue="A Caso No Me Crees" /></Field>
          <Field $h={36}>Álbum<TextInput /></Field>
          <Field>Año<TextInput /></Field>
          <FieldRow $gap={6}>
            <Field $w={161}>Género<Combo defaultValue="Vallenato"><option>Vallenato</option></Combo></Field>
            <Spacer />
            <PushButton type="button" $w={22}>...</PushButton>
          </FieldRow>
          <Field $h={53}>Comentario<NoteBox><NoteArea /><NoteScroll><Tri s={6} color="#888" /><Tri s={6} dir="down" color="#888" /></NoteScroll></NoteBox></Field>
          <FieldRow $gap={8}>
            <Field $h={39} $w={91}>Puntuación<Combo $button><option>5</option></Combo></Field>
            <Field $h={39} $w={90}>Género<Combo $button><option></option></Combo></Field>
          </FieldRow>
          <FieldRow $gap={6}>
            <Field $w={161} $h={38}>Idioma<Combo><option></option></Combo></Field>
            <Spacer />
            <PushButton type="button" $w={22}>...</PushButton>
          </FieldRow>
          <FieldRow $gap={8} $clip>
            <Field $w={90} $h={39}>Tipo de archivo<Combo><option></option></Combo></Field>
            <Field $h={39}>Recuento de reproducción<TextInput $short defaultValue="1" /></Field>
          </FieldRow>
          <FieldRow $gap={2}>
            <Field $w={148}>Tags<TextInput /></Field>
            <Spacer />
            <PushButton type="button" $w={19} $h={18}>+</PushButton>
            <PushButton type="button" $w={19} $h={18}>-</PushButton>
          </FieldRow>
        </TagPane>
        <CuePane>
          <PathBox>C:\Users\JUNIOR LOPEZ\Desktop\VOCES PARA TU MARCA TUTORIAL\Vallenato Roma</PathBox>
          <WaveFrame>
            <Waveform />
            <TimeScale>{["00:00", "00:27", "00:55", "01:23", "01:50", "02:18", "02:46", "03:13", "03:41"].map((t) => <span key={t}>{t}</span>)}</TimeScale>
          </WaveFrame>
          <PlayRow>
            <Inline $gap={3}>
              <PushButton type="button" $w={29} aria-label="Reproducir"><PlayIcon /></PushButton>
              <StopPush type="button" $w={66}><svg width="10" height="10"><path d="M0 0h10v10H0z" /></svg>Detener (F5</StopPush>
            </Inline>
            <Elapsed>00:17.7 - 04:14.1</Elapsed>
            <Speaker />
            <ThinRange type="range" $w={98} defaultValue={99} aria-label="Volumen" />
            <Spacer $w={12} />
            <Inline $gap={2}>
              <PushButton type="button" $w={21} aria-label="Alejar"><Lens minus /></PushButton>
              <PushButton type="button" $w={21} aria-label="Acercar"><Lens /></PushButton>
            </Inline>
          </PlayRow>
          <CueArea>
            <div>
              <Cue cols={LEFT_COLS} name="Empezar" value="0,91" checked />
              <Cue cols={LEFT_COLS} name="Intro" value="0,00" />
              <Cue cols={LEFT_COLS} name="Outro" value="0,00" />
              <Cue cols={LEFT_COLS} name="Fin" value="246,27" checked />
              <Cue cols={LEFT_COLS} name="Fade in" value="0,00" />
              <Cue cols={LEFT_COLS} name="Mezcla" value="7,81" />
              <Cue cols={LEFT_COLS} name="Fade Out" value="0,00" />
            </div>
            <div>
              <Cue cols={RIGHT_COLS} name="Hook In" value="0,00" />
              <Cue cols={RIGHT_COLS} name="Hook Out" value="0,00" extra="none" hot />
              <Cue cols={RIGHT_COLS} name="Inserciones" value="0,00" extra="dots" />
              <CueExtras>
                <Inline $gap={10}>
                  <BpmLabel>BPM<BpmInput /></BpmLabel>
                  <PushButton type="button" $w={60}>Detectar</PushButton>
                </Inline>
                <CueRow $cols="auto"><CheckLabel><Check type="checkbox" />Inhabilitar canción</CheckLabel></CueRow>
                <WideButton type="button" $w={126}>et iniciar/terminar datos.</WideButton>
              </CueExtras>
            </div>
          </CueArea>
          <LevelRow>
            <label htmlFor="level">Nivel de reproducción</label>
            <ThinRange id="level" type="range" $w={133} $overlay defaultValue={50} />
            <output>0 dB</output>
            <PushButton type="button" $w={60}>Detectar</PushButton>
          </LevelRow>
        </CuePane>
      </Panes>
      <DialogFooter>
        <PushButton type="button" $w={22}>?</PushButton>
        <Spacer $w={8} />
        <PushButton type="button" $w={64}>Style</PushButton>
        <Spacer $w={7} />
        <CheckLabel><Check type="checkbox" />Borrar información adicional del archivo</CheckLabel>
        <Spacer />
        <IconPush type="button" $w={69}><ShortArrow /><span>Ant.</span></IconPush>
        <Spacer $w={7} />
        <IconPush type="button" $w={69}><ShortArrow down /><span>Sig.</span></IconPush>
        <Spacer $w={15} />
        <PushButton type="submit" $w={68} $default>Aceptar</PushButton>
        <Spacer $w={7} />
        <PushButton type="button" $w={69}>Cancelar</PushButton>
      </DialogFooter>
    </DialogBody>
  </Dialog>
);

export default function App() {
  return (
    <>
      <GlobalStyle />
      <Desktop>
        <TitleBar>
          <svg width="13" height="16" viewBox="0 0 13 16"><rect y="2" width="10" height="13" rx="1" fill="#c5331f" /><circle cx="5" cy="7" r="3.500" fill="#222" stroke="#eee" /><path d="M8 6q4 4 2 9" fill="none" stroke="#333" strokeWidth="2" /></svg>
          <TitleText>RadioBOSS Advanced (5.9.3.0)</TitleText>
          <CaptionButtons>
            <CaptionButton aria-label="Minimizar"><svg width="10" height="4"><path d="M0 0h10v4H0z" fill="#fff" /></svg></CaptionButton>
            <CaptionButton aria-label="Restaurar"><svg width="11" height="10" fill="none" stroke="#fff"><path d="M3.500 2V.5h7v7H9" /><path d="M1.500 3h6v5.500h-6z" strokeWidth="2" /></svg></CaptionButton>
            <CaptionButton $wide aria-label="Cerrar"><svg width="10" height="10"><path d="M1.500 1l7 8M8.500 1l-7 8" stroke="#fff" strokeWidth="2.500" /></svg></CaptionButton>
          </CaptionButtons>
        </TitleBar>
        <MenuBar>
          {["Archivo", "Editar", "Ver", "Lista de reproducción", "Herramientas", "Pisadores", "Configuración", "Ayuda"].map((m) => <MenuItem href="#" key={m}>{m}</MenuItem>)}
          <UserBox><svg width="10" height="8"><path d="M0 8q0-3 3-3t3 3zM8 3h2v5H8z" fill="#bbb" /><circle cx="3" cy="2.500" r="2" fill="#bbb" /></svg>Usuario</UserBox>
        </MenuBar>
        <Shell>
          <ToolBar>
            {TOOL_ORDER.map((t, i) => t === "|" ? <Divider key={i} /> : (
              <ToolButton key={i} aria-label={t}><svg width="16" height="16" viewBox="0 0 16 16" fill="none">{TOOL[t]}</svg></ToolButton>
            ))}
            <ProfileName>Default</ProfileName>
          </ToolBar>
          <NowRow>
            <ClockBlock>
              <Caption>mié 08/04/2020</Caption>
              <ClockFace>08:17:25 p.m.<Countdown>42:35</Countdown></ClockFace>
            </ClockBlock>
            <TrackBlock $grow={32}><Caption>Pista anterior</Caption><TrackBox $fill="#f8c896" /></TrackBlock>
            <TrackBlock $grow={43}><Caption>En aire</Caption><TrackBox $fill="#b4ffb0" /></TrackBlock>
            <TrackBlock $grow={32}><Caption>Pista siguiente</Caption><TrackBox $fill="#ecfabd" /></TrackBlock>
            <LogoSlot><VpLogo w={46} /></LogoSlot>
          </NowRow>
          <Body>
            <LeftColumn>
              <TabStrip>
                <TabButton $w={58} aria-label="Archivos"><TabShape w={58} active /><span><Icon name="openTab" size={15} /></span></TabButton>
                <TabButton $w={54} $overlap aria-label="Buscar"><TabShape w={54} /><span><Icon name="lensTab" size={15} /></span></TabButton>
                <TabButton $w={54} $overlap aria-label="Programador"><TabShape w={54} /><span><Icon name="clockTab" size={15} /></span></TabButton>
                <TabButton $w={54} $overlap aria-label="Registro"><TabShape w={54} /><span><Icon name="cam" size={15} /></span></TabButton>
              </TabStrip>
              <TreePanel>
                <TreeFrame>
                  <TreeList>
                    {TREE.map(([icon, label, open], i) => (
                      <TreeRow key={i}>
                        <Twisty>{open && <svg width="6" height="8"><path d="M1 1l4 3-4 3z" fill="#fff" stroke="#999" /></svg>}</Twisty>
                        <Icon name={icon} />
                        <TreeLabel>{label}</TreeLabel>
                      </TreeRow>
                    ))}
                  </TreeList>
                  <VScroll><Tri /><VThumb><Gripper vertical /></VThumb><Tri dir="down" /></VScroll>
                </TreeFrame>
              </TreePanel>
              <TabStrip><TabButton $w={106} $text><TabShape w={106} active /><span>Log</span></TabButton></TabStrip>
              <LogPanel>
                <LogTable>
                  <thead><tr><th>Time</th><th>Title</th></tr></thead>
                  <tbody>
                    <tr><td>08:08:05 p...</td><td>Started</td></tr>
                    <tr><td>08:08:17 p...</td><td>Exit</td></tr>
                    <tr><td>08:08:43 p...</td><td>Started</td></tr>
                  </tbody>
                </LogTable>
                <HScroll><Tri dir="left" /><HThumb><Gripper /></HThumb><Tri dir="right" /></HScroll>
              </LogPanel>
            </LeftColumn>
            <RightColumn>
              <PlaylistHead />
              <Playlist />
              <TrackInfo>
                <InfoLine>MP3 Joint Stereo 192kbps</InfoLine>
                <InfoLine>44100Hz</InfoLine>
                <InfoLine $left>Playcount: 1 Played</InfoLine>
                <InfoLine $left>31/05/2018 07:31:16</InfoLine>
                <FileLine>
                  <span>\A Caso No Me Crees-Patricia Teheran.mp3</span>
                  <SaveButton aria-label="Guardar"><svg width="14" height="14" viewBox="0 0 14 14"><path d="M1 7v6h12V7" fill="#fff" stroke="#555" /><path d="M5 0h4v5h3L7 10 2 5h3z" fill="#2b4f9c" /></svg></SaveButton>
                </FileLine>
              </TrackInfo>
              <Remaining>de reproducción restante: 0:04:05 <Speaker /><VolumeRange type="range" defaultValue={100} aria-label="Volumen general" /></Remaining>
              <Transport>
                <RoundButton aria-label="Anterior"><svg width="12" height="10"><path d="M1 0v10M11 0v10L2 5z" fill="#777" stroke="#777" /></svg></RoundButton>
                <RoundButton $big aria-label="Reproducir"><svg width="16" height="16"><path d="M1 1l14 7-14 7z" fill="#888" /></svg></RoundButton>
                <RoundButton aria-label="Siguiente"><svg width="12" height="10"><path d="M11 0v10M1 0v10l9-5z" fill="#777" stroke="#777" /></svg></RoundButton>
                <RoundButton aria-label="Pausa"><svg width="10" height="12"><path d="M2 0v12M8 0v12" stroke="#777" strokeWidth="2.500" /></svg></RoundButton>
                <RoundButton aria-label="Detener"><svg width="13" height="10"><path d="M0 0h13v10H0z" fill="#777" /></svg></RoundButton>
                <RoundButton $apart aria-label="Repetir"><svg width="12" height="12" fill="none" stroke="#777" strokeWidth="2"><path d="M3 2h5q3 0 3 4t-3 4H5M1 9h6" /></svg></RoundButton>
                <RoundButton aria-label="Cancelar"><svg width="14" height="14" fill="none" stroke="#777" strokeWidth="1.500"><circle cx="7" cy="7" r="6" /><path d="M3 3l8 8" /></svg></RoundButton>
                <RoundButton>SHFL</RoundButton>
                <RoundButton aria-label="Cola"><svg width="16" height="12" fill="none" stroke="#777"><path d="M6 1.500h9v9H6zM8 4h5M8 6h5M8 8h5M6 3H2v6h3" /></svg></RoundButton>
                <MicButton>MIC</MicButton>
              </Transport>
            </RightColumn>
          </Body>
          <StatusBar>
            <StatusCell $w={176}>
              <svg width="10" height="10"><path d="M1.500 1.500l7 7M8.500 1.500l-7 7" stroke="#d9412f" strokeWidth="3" /></svg>Detector de silencio: Desactivado
            </StatusCell>
            <StatusCell $w={127}>
              <svg width="10" height="10"><path d="M1 5l3 3 5-6" fill="none" stroke="#46b04a" strokeWidth="2.500" /></svg><TrailingText>do</TrailingText>
            </StatusCell>
            <StatusCell $w={6} />
          </StatusBar>
        </Shell>
        <TaskBar>
          <svg width="36" height="36" viewBox="0 0 36 36">
            <circle cx="18" cy="18" r="17.500" fill="#1d5f86" stroke="#7fa5ba" /><path d="M3 14a15.500 15.500 0 0 1 30 0q-15 6-30 0z" fill="#79aac4" opacity=".7" />
            <path d="M11 10q4-2 8 0l-1.500 7q-4-2-8 0z" fill="#e4572b" /><path d="M20 11q4 2 8 0l-2 7q-4 2-7.500 0z" fill="#84bd3c" /><path d="M9 19q4-2 8 0l-1.500 7q-4-2-8 0z" fill="#4aa0dd" /><path d="M18 20q4 2 8 0l-2 7q-4 2-7.500 0z" fill="#f3c534" />
          </svg>
          <Spacer $w={11} /><Grip />
          <TaskButton $w={48} $mode="open" $gap={10} aria-label="Explorador"><svg width="32" height="28" viewBox="0 0 32 28"><path d="M1 3h8l2 2h9l2-2h8v22H1z" fill="#f0dd88" /><path d="M2 8h28v17H2z" fill="#f7ebab" /><path d="M6 27v-8q0-2 2-2h16q2 0 2 2v8h-5v-5H11v5z" fill="#9cc9e6" stroke="#6ba4c9" /></svg></TaskButton>
          <TaskButton $w={48} $gap={11} aria-label="Reproductor"><svg width="26" height="24" viewBox="0 0 26 24"><path d="M1 2h22l2 2v19H3L1 21z" fill="#8fbcd3" /><path d="M3 3h18v18H3z" fill="#c8dfea" /><circle cx="12" cy="12" r="8" fill="#e2732a" /><path d="M9.500 7.500l7 4.500-7 4.500z" fill="#fff" /></svg></TaskButton>
          <TaskButton $w={50} $mode="open" $gap={8} aria-label="Chrome">
            <svg width="28" height="28" viewBox="0 0 28 28"><circle cx="14" cy="14" r="13.500" fill="#f6c72c" /><path d="M14 14L2.300 7.200A13.500 13.500 0 0 1 25.700 7.200z" fill="#dc3a2c" /><path d="M14 14L2.300 7.200A13.500 13.500 0 0 0 13 27.500z" fill="#2fa34d" /><circle cx="14" cy="14" r="6.200" fill="#fff" /><circle cx="14" cy="14" r="4.800" fill="#3f78e0" /></svg>
          </TaskButton>
          <TaskButton $w={50} $gap={10} aria-label="VLC"><Icon name="vlc" size={28} /></TaskButton>
          <TaskButton $w={54} $mode="open" $gap={6} aria-label="Audition">
            <svg width="28" height="26"><path d="M0 0h28v26H0z" fill="#2a5d62" /><text x="4" y="18" fontSize="15" fontWeight="bold" fill="#fff" fontFamily="Open Sans, sans-serif">Au</text></svg>
          </TaskButton>
          <TaskButton $w={54} $mode="open" aria-label="Emisor"><svg width="30" height="30" fill="none" stroke="#22912a" strokeWidth="1.500"><circle cx="15" cy="15" r="14" fill="#55dd4e" stroke="#9df28f" /><circle cx="15" cy="15" r="9" /><circle cx="15" cy="15" r="5.500" /><circle cx="15" cy="15" r="2" /></svg></TaskButton>
          <TaskButton $w={54} $mode="open" aria-label="Notas"><svg width="30" height="28"><path d="M8 3h18l3 20-4 3z" fill="#c9a257" /><path d="M10 2h15l-1 24L1 22z" fill="#9bd0d6" /><path d="M10 2h15v8L7 14z" fill="#d3edf0" /></svg></TaskButton>
          <TaskButton $w={54} $mode="open" aria-label="Garra"><svg width="28" height="26"><path d="M1 11Q1 5 4 5q1 0 2 2 0-5 3-5 2 0 3 3 0-4 3-4t3.500 4Q20 2 22.500 3T24 9q3-1 3 3-1 13-13 13Q2 24 1 11z" fill="#e0752a" stroke="#3a1a08" /><path d="M6 8l3 7M12 6l1 8M18.500 6L17 14M24 9l-4 6M6 18q5-4 9-1" fill="none" stroke="#5a2808" strokeWidth="1.400" /></svg></TaskButton>
          <TaskButton $w={54} $mode="open" aria-label="RadioBOSS"><svg width="30" height="30"><rect x="8" y="8" width="16" height="21" rx="2" fill="#cc2a25" /><path d="M6 12Q8 2 18 2" fill="none" stroke="#222" strokeWidth="2" /><circle cx="17" cy="15" r="4.500" fill="#222" stroke="#ddd" /><circle cx="17" cy="25" r="2" fill="#5b0b0a" /><circle cx="5" cy="22" r="4.500" fill="#aaa" /><path d="M25 16q4 2 2 8h-3z" fill="#999" /></svg></TaskButton>
          <TaskButton $w={54} $mode="active" aria-label="Track Tool"><svg width="26" height="26"><rect x=".5" y=".5" width="25" height="25" rx="4" fill="#555" stroke="#ddd" /><path d="M5 4h4v17H5zM11 4h4v17h-4zM17 4h5v12h-5z" fill="#fafafa" /><path d="M7 6v8M13 6v8M19.500 6v8" stroke="#111" strokeWidth="2" strokeDasharray="2 2" /></svg></TaskButton>
          <Spacer $w={48} /><Grip />
          <DeskBand><BandLink href="#">Escritorio</BandLink><BandLink href="#" $raised><Icon name="libs" size={16} />Bibliotecas</BandLink></DeskBand>
          <Tray>
            <Chevron aria-label="Más">»</Chevron>
            <Grip />
            <span>ES</span>
            <svg width="15" height="15"><circle cx="7.500" cy="7.500" r="6.800" fill="#2538b4" stroke="#c8cdf0" /><text x="5" y="12" fontSize="11" fontWeight="bold" fill="#fff" fontFamily="Open Sans, sans-serif">?</text></svg>
            <svg width="9" height="18"><path d="M2.500 1.500h6v3h-6zM.5 3.500h5v3h-5z" fill="none" stroke="#fff" /><path d="M2 13h6l-3 3z" fill="#fff" /></svg>
            <Tri s={8} color="#fff" />
            <svg width="15" height="14"><path d="M1.500 0v14" stroke="#fff" strokeWidth="1.500" /><path d="M3 1h5l1 2h5l-2 3 1 2H8L7 7H3z" fill="#fff" /></svg>
            <svg width="14" height="14" fill="none" stroke="#fff"><path d="M1 3h6v10H1zM7 6h6v3q0 2-3 2v3M8 6V2M12 6V2" strokeWidth="1.500" /></svg>
            <svg width="14" height="14"><path d="M7 0l7 14H0z" fill="#f2d23c" /></svg>
            <Clock>m.<br />08/04/2020</Clock>
          </Tray>
        </TaskBar>
        <TrackTool />
        <Watermark><VpLogo w={92} caption /></Watermark>
        <Cursor width="14" height="20" viewBox="0 0 14 20"><path d="M1 1v15l3.500-3.500L7 18.500l2.500-1L7 12h5z" fill="#fff" stroke="#222" /></Cursor>
      </Desktop>
    </>
  );
}
